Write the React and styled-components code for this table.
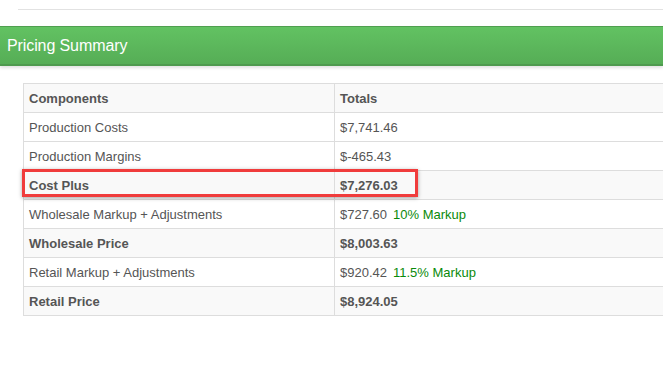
import React from 'react'
import styled, { createGlobalStyle } from 'styled-components'

const GlobalStyle = createGlobalStyle`
  html, body {
    margin: 0;
    padding: 0;
    background: #fff;
    overflow: hidden;
  }
  body {
    font-family: "Liberation Sans", Arial, sans-serif;
    font-size: 13px;
    color: #555;
  }
`

const rows = [
  { label: 'Production Costs', total: '$7,741.46' },
  { label: 'Production Margins', total: '$-465.43' },
  { label: 'Cost Plus', total: '$7,276.03', strong: true, highlight: true },
  { label: 'Wholesale Markup + Adjustments', total: '$727.60', note: '10% Markup' },
  { label: 'Wholesale Price', total: '$8,003.63', strong: true },
  { label: 'Retail Markup + Adjustments', total: '$920.42', note: '11.5% Markup' },
  { label: 'Retail Price', total: '$8,924.05', strong: true },
]

const App = () => {
  return (
    <Page>
      <GlobalStyle />
      <TopRule />
      <PanelHeading>Pricing Summary</PanelHeading>
      <TableWrap>
        <Table>
          <thead>
            <Row $shaded>
              <HeadCell $first>Components</HeadCell>
              <HeadCell>Totals</HeadCell>
            </Row>
          </thead>
          <tbody>
            {rows.map((r) => (
              <Row key={r.label} $shaded={r.strong} $strong={r.strong}>
                <Cell $first>
                  {r.label}
                  {r.highlight && <Highlight />}
                </Cell>
                <Cell>
                  {r.total}
                  {r.note && <Note>{r.note}</Note>}
                </Cell>
              </Row>
            ))}
          </tbody>
        </Table>
      </TableWrap>
    </Page>
  )
}

const Page = styled.main`
  width: 663px;
  height: 366px;
  padding-top: 9px;
  box-sizing: border-box;
`

const TopRule = styled.hr`
  margin: 0 0 0 18px;
  border: 0;
  border-top: 1px solid #e2e2e2;
  height: 0;
`

const PanelHeading = styled.h3`
  margin: 16px 0 0;
  height: 40px;
  box-sizing: border-box;
  display: flex;
  align-items: center;
  padding: 1px 0 0 7px;
  font-size: 16px;
  font-weight: 400;
  color: #fff;
  letter-spacing: -0.1px;
  background: linear-gradient(to bottom, #62c262 0%, #56ad56 100%);
  border-top: 1px solid #4f9f4f;
  border-bottom: 2px solid #4e9a4e;
  box-shadow: 0 2px 3px rgba(0, 0, 0, 0.12);
`

const TableWrap = styled.div`
  margin: 17px 0 0 23px;
  width: 640px;
`

const Table = styled.table`
  width: 100%;
  table-layout: fixed;
  border-collapse: collapse;
  border-top: 1px solid #dddddd;
  border-left: 1px solid #dddddd;
`

const Row = styled.tr`
  height: 29px;
  background: ${(p) => (p.$shaded ? '#f9f9f9' : '#fff')};
  font-weight: ${(p) => (p.$strong ? 700 : 400)};
  border-bottom: 1px solid #dddddd;
`

const HeadCell = styled.th`
  text-align: left;
  font-weight: 700;
  padding: 0 5px;
  width: ${(p) => (p.$first ? '300px' : 'auto')};
  border-right: ${(p) => (p.$first ? '1px solid #dddddd' : '0')};
`

const Cell = styled.td`
  position: relative;
  padding: 0 5px;
  white-space: nowrap;
  border-right: ${(p) => (p.$first ? '1px solid #dddddd' : '0')};
`

const Note = styled.span`
  color: #0a8a0a;
  margin-left: 6px;
`

const Highlight = styled.span`
  position: absolute;
  left: -2px;
  top: -2px;
  width: 390px;
  height: 22px;
  border: 3px solid #f03c3c;
  box-shadow: 0 1px 4px rgba(0, 0, 0, 0.35);
  pointer-events: none;
  z-index: 2;
`

export default App
